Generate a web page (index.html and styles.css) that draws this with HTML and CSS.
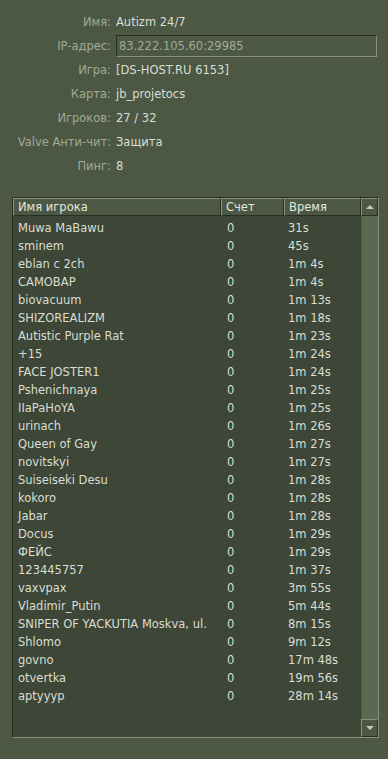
FILE: index.html
```html
<!DOCTYPE html>
<html lang="ru">
<head>
    <meta charset="UTF-8">
    <title>Информация о сервере</title>
    <link rel="stylesheet" href="styles.css">
</head>
<body>
    <div class="info">
        <div class="info-row"><span class="label">Имя:</span><span class="value">Autizm 24/7</span></div>
        <div class="info-row"><span class="label">IP-адрес:</span><span class="value ip-box">83.222.105.60:29985</span></div>
        <div class="info-row"><span class="label">Игра:</span><span class="value">[DS-HOST.RU 6153]</span></div>
        <div class="info-row"><span class="label">Карта:</span><span class="value">jb_projetocs</span></div>
        <div class="info-row"><span class="label">Игроков:</span><span class="value">27 / 32</span></div>
        <div class="info-row"><span class="label">Valve Анти-чит:</span><span class="value">Защита</span></div>
        <div class="info-row"><span class="label">Пинг:</span><span class="value">8</span></div>
    </div>

    <div class="player-list">
        <div class="list-main">
            <div class="list-header">
                <div class="head-cell col-name">Имя игрока</div>
                <div class="head-cell col-score">Счет</div>
                <div class="head-cell col-time">Время</div>
            </div>
            <div class="list-rows" id="rows"></div>
        </div>
        <div class="scrollbar">
            <div class="scroll-btn"><span class="arrow-up"></span></div>
            <div class="scroll-track"><div class="scroll-thumb"></div></div>
            <div class="scroll-btn"><span class="arrow-down"></span></div>
        </div>
    </div>

    <script>
        const players = [
            ['Muwa MaBawu', 0, '31s'],
            ['sminem', 0, '45s'],
            ['eblan c 2ch', 0, '1m 4s'],
            ['CAMOBAP', 0, '1m 4s'],
            ['biovacuum', 0, '1m 13s'],
            ['SHIZOREALIZM', 0, '1m 18s'],
            ['Autistic Purple Rat', 0, '1m 23s'],
            ['+15', 0, '1m 24s'],
            ['FACE JOSTER1', 0, '1m 24s'],
            ['Pshenichnaya', 0, '1m 25s'],
            ['IIaPaHoYA', 0, '1m 25s'],
            ['urinach', 0, '1m 26s'],
            ['Queen of Gay', 0, '1m 27s'],
            ['novitskyi', 0, '1m 27s'],
            ['Suiseiseki Desu', 0, '1m 28s'],
            ['kokoro', 0, '1m 28s'],
            ['Jabar', 0, '1m 28s'],
            ['Docus', 0, '1m 29s'],
            ['ФЕЙС', 0, '1m 29s'],
            ['123445757', 0, '1m 37s'],
            ['vaxvpax', 0, '3m 55s'],
            ['Vladimir_Putin', 0, '5m 44s'],
            ['SNIPER OF YACKUTIA Moskva, ul.', 0, '8m 15s'],
            ['Shlomo', 0, '9m 12s'],
            ['govno', 0, '17m 48s'],
            ['otvertka', 0, '19m 56s'],
            ['aptyyyp', 0, '28m 14s']
        ];

        const rows = document.getElementById('rows');
        players.forEach(p => {
            const row = document.createElement('div');
            row.className = 'list-row';
            row.innerHTML = `
                <div class="cell col-name">${p[0]}</div>
                <div class="cell col-score">${p[1]}</div>
                <div class="cell col-time">${p[2]}</div>
            `;
            rows.appendChild(row);
        });
    </script>
</body>
</html>
```

FILE: styles.css
```css
body {
    margin: 0;
    background-color: #4c5844;
    font-family: "DejaVu Sans", Verdana, sans-serif;
    font-size: 11.5px;
    color: #d8ded3;
    width: 388px;
    height: 759px;
    overflow: hidden;
}

.info {
    padding-top: 10px;
}

.info-row {
    display: flex;
    align-items: center;
    height: 24px;
}

.label {
    width: 111px;
    text-align: right;
    padding-right: 5px;
    color: #a0aa95;
    white-space: nowrap;
}

.value {
    color: #d8ded3;
}

.ip-box {
    width: 261px;
    height: 22px;
    line-height: 20px;
    padding-left: 2px;
    box-sizing: border-box;
    border: 1px solid;
    border-color: #282e22 #889180 #889180 #282e22;
    color: #a0aa95;
}

.player-list {
    display: flex;
    margin: 19px 0 0 12px;
    width: 367px;
    height: 541px;
    box-sizing: border-box;
    border: 1px solid;
    border-color: #282e22 #889180 #889180 #282e22;
    background-color: #3e4637;
}

.list-main {
    flex: 1;
    overflow: hidden;
}

.list-header {
    display: flex;
    height: 18px;
    background-color: #4c5844;
}

.head-cell {
    box-sizing: border-box;
    height: 18px;
    line-height: 16px;
    border: 1px solid;
    border-color: #889180 #282e22 #282e22 #889180;
    color: #e4e8dc;
    padding-left: 4px;
    white-space: nowrap;
}

.col-name {
    width: 208px;
}

.col-score {
    width: 63px;
}

.col-time {
    flex: 1;
}

.list-rows {
    padding-top: 3px;
}

.list-row {
    display: flex;
    height: 18px;
    line-height: 18px;
}

.cell {
    padding-left: 5px;
    white-space: nowrap;
    overflow: hidden;
    box-sizing: border-box;
}

.list-row .col-score {
    padding-left: 6px;
}

.list-row .col-time {
    padding-left: 4px;
}

.scrollbar {
    width: 17px;
    display: flex;
    flex-direction: column;
}

.scroll-btn {
    height: 18px;
    box-sizing: border-box;
    border: 1px solid;
    border-color: #889180 #282e22 #282e22 #889180;
    background-color: #4c5844;
    display: flex;
    align-items: center;
    justify-content: center;
}

.arrow-up {
    width: 0;
    height: 0;
    border-left: 4px solid transparent;
    border-right: 4px solid transparent;
    border-bottom: 4px solid #c4cbbb;
}

.arrow-down {
    width: 0;
    height: 0;
    border-left: 4px solid transparent;
    border-right: 4px solid transparent;
    border-top: 4px solid #c4cbbb;
}

.scroll-track {
    flex: 1;
    background-color: #3e4637;
    display: flex;
}

.scroll-thumb {
    flex: 1;
    background-color: #5a6a50;
    box-sizing: border-box;
    border-left: 1px solid #4c5844;
}
```
